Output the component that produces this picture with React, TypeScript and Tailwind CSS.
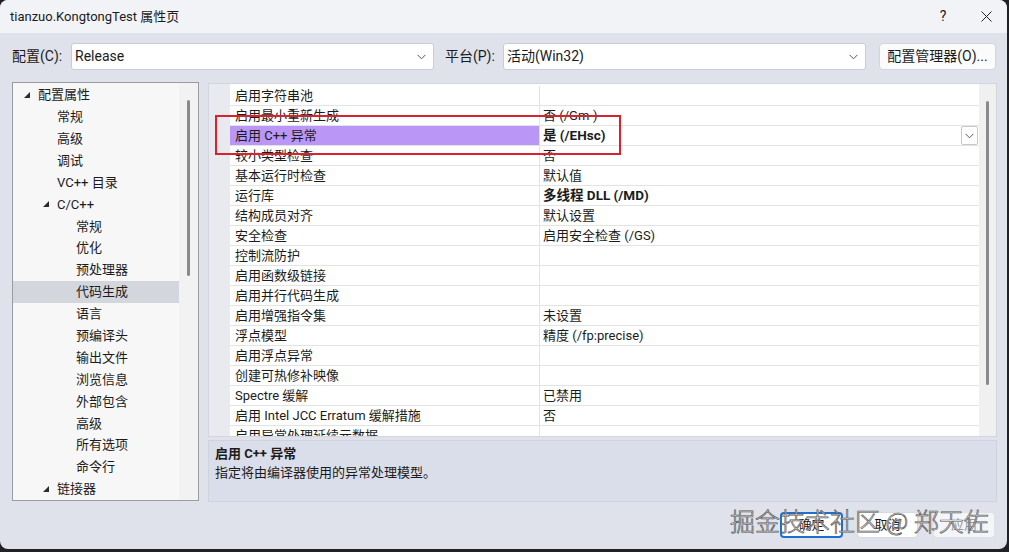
import React from 'react'

type TreeItem = { label: string; level: 0 | 1 | 2; open?: boolean; selected?: boolean }

const tree: TreeItem[] = [
  { label: '配置属性', level: 0, open: true },
  { label: '常规', level: 1 },
  { label: '高级', level: 1 },
  { label: '调试', level: 1 },
  { label: 'VC++ 目录', level: 1 },
  { label: 'C/C++', level: 1, open: true },
  { label: '常规', level: 2 },
  { label: '优化', level: 2 },
  { label: '预处理器', level: 2 },
  { label: '代码生成', level: 2, selected: true },
  { label: '语言', level: 2 },
  { label: '预编译头', level: 2 },
  { label: '输出文件', level: 2 },
  { label: '浏览信息', level: 2 },
  { label: '外部包含', level: 2 },
  { label: '高级', level: 2 },
  { label: '所有选项', level: 2 },
  { label: '命令行', level: 2 },
  { label: '链接器', level: 1, open: true },
]

type Prop = { name: string; value?: string; bold?: boolean; active?: boolean }

const props: Prop[] = [
  { name: '启用字符串池' },
  { name: '启用最小重新生成', value: '否 (/Gm-)' },
  { name: '启用 C++ 异常', value: '是 (/EHsc)', bold: true, active: true },
  { name: '较小类型检查', value: '否' },
  { name: '基本运行时检查', value: '默认值' },
  { name: '运行库', value: '多线程 DLL (/MD)', bold: true },
  { name: '结构成员对齐', value: '默认设置' },
  { name: '安全检查', value: '启用安全检查 (/GS)' },
  { name: '控制流防护' },
  { name: '启用函数级链接' },
  { name: '启用并行代码生成' },
  { name: '启用增强指令集', value: '未设置' },
  { name: '浮点模型', value: '精度 (/fp:precise)' },
  { name: '启用浮点异常' },
  { name: '创建可热修补映像' },
  { name: 'Spectre 缓解', value: '已禁用' },
  { name: '启用 Intel JCC Erratum 缓解措施', value: '否' },
  { name: '启用异常处理延续元数据' },
]

const indent = { 0: 'pl-[25px]', 1: 'pl-[44px]', 2: 'pl-[63px]' }

function Chevron({ className = '' }: { className?: string }) {
  return (
    <svg width="9" height="6" viewBox="0 0 9 6" className={className}>
      <path d="M0.5 0.8 L4.5 4.8 L8.5 0.8" fill="none" stroke="#555" strokeWidth="1" />
    </svg>
  )
}

function Triangle() {
  return (
    <span className="-ml-[14px] w-[14px] flex items-center">
      <svg width="6" height="6" viewBox="0 0 6 6">
        <polygon points="6,0 6,6 0,6" fill="#2b2b2b" />
      </svg>
    </span>
  )
}

function Select({ value }: { value: string }) {
  return (
    <div className="w-[363px] h-[27px] bg-white border border-[#c9ccd4] rounded-[3px] flex items-center justify-between pl-[3px] pr-[7px] text-[14px] text-[#1a1a1a]">
      <span>{value}</span>
      <Chevron />
    </div>
  )
}

export default function App() {
  return (
    <div className="w-[1009px] h-[552px] bg-[#202124] font-['Roboto','Noto_Sans_CJK_SC',sans-serif] text-[#1b1b1b] overflow-hidden">
      <div className="relative w-[1007px] h-[549px] rounded-[8px] bg-[#dfe2eb] flex flex-col overflow-hidden">
        {/* Title bar */}
        <div className="h-[33px] bg-[#f1f3f7] flex items-center pl-[10px] text-[13px] shrink-0">
          <span className="flex-1">tianzuo.KongtongTest 属性页</span>
          <span className="w-[20px] text-center mr-[28px] text-[14px]">?</span>
          <svg width="11" height="11" viewBox="0 0 11 11" className="mr-[15px]">
            <path d="M0.5 0.5 L10.5 10.5 M10.5 0.5 L0.5 10.5" stroke="#222" strokeWidth="1" />
          </svg>
        </div>

        {/* Config row */}
        <div className="h-[49px] flex items-start pt-[10px] pl-[12px] text-[14px] shrink-0">
          <span className="w-[59px] h-[27px] flex items-center">配置(C):</span>
          <Select value="Release" />
          <span className="ml-[11px] w-[58px] h-[27px] flex items-center">平台(P):</span>
          <Select value="活动(Win32)" />
          <div className="ml-[13px] w-[117px] h-[27px] bg-[#fbfbfc] border border-[#d2d5dc] rounded-[4px] flex items-center justify-center">
            配置管理器(O)...
          </div>
        </div>

        {/* Main */}
        <div className="flex h-[420px] shrink-0">
          {/* Tree */}
          <div className="ml-[12px] w-[187px] h-[419px] border border-[#9b9ca3] bg-[#f7f7f7] flex text-[13px]">
            <div className="w-[166px] pt-[1px] flex flex-col">
              {tree.map((t, i) => (
                <div
                  key={i}
                  className={`h-[22px] flex items-center ${indent[t.level]} ${t.selected ? 'bg-[#d4d6de]' : ''}`}
                >
                  {t.open && <Triangle />}
                  <span>{t.label}</span>
                </div>
              ))}
            </div>
            <div className="w-[19px] bg-[#f2f2f2] flex justify-center pt-[17px]">
              <div className="w-[3px] h-[176px] bg-[#8a8a8e] rounded-full" />
            </div>
          </div>

          {/* Right */}
          <div className="ml-[9px] w-[789px] flex flex-col">
            <div className="relative h-[355px] mt-[1px] border border-[#d3d6de] bg-[#e8eaef] flex overflow-hidden">
              <div className="w-[21px]" />
              <div className="w-[749px] bg-white pt-[2px] text-[13px]">
                {props.map((p, i) => (
                  <div key={i} className="h-[20px] flex border-b border-[#e3e3e3]">
                    <div
                      className={`w-[310px] shrink-0 pl-[5px] flex items-center border-r border-[#e3e3e3] ${p.active ? 'bg-[#ba97f6]' : ''}`}
                    >
                      {p.name}
                    </div>
                    <div className={`flex-1 pl-[3px] flex items-center justify-between ${p.bold ? 'font-bold text-[13.5px]' : ''}`}>
                      <span>{p.value}</span>
                      {p.active && (
                        <div className="w-[17px] h-[19px] mr-[1px] bg-white border border-[#c9c9c9] rounded-[2px] flex items-center justify-center">
                          <Chevron />
                        </div>
                      )}
                    </div>
                  </div>
                ))}
              </div>
              <div className="w-[17px] bg-[#f0f0f0] flex justify-center pt-[17px]">
                <div className="w-[3px] h-[284px] bg-[#8a8a8e] rounded-full" />
              </div>
              {/* red annotation box */}
              <div className="absolute left-[6px] top-[31px] w-[406px] h-[40px] border-2 border-[#d8232f]" />
            </div>

            <div className="mt-[3px] h-[62px] border border-[#cfd3dc] bg-[#dadeea] px-[6px] pt-[3px] text-[13px]">
              <div className="font-bold leading-[20px]">启用 C++ 异常</div>
              <div className="leading-[18px]">指定将由编译器使用的异常处理模型。</div>
            </div>
          </div>
        </div>

        {/* Buttons */}
        <div className="flex justify-end pr-[12px] pt-[10px] text-[13px]">
          <div className="w-[63px] h-[26px] bg-white border-2 border-[#1f6fcf] rounded-[4px] flex items-center justify-center">确定</div>
          <div className="ml-[14px] w-[61px] h-[26px] bg-white border border-[#d6d9df] rounded-[4px] flex items-center justify-center">取消</div>
          <div className="ml-[15px] w-[62px] h-[26px] bg-[#f4f5f8] border border-[#dfe1e6] rounded-[4px] flex items-center justify-center text-[#9a9a9a]">应用</div>
        </div>

        {/* watermark */}
        <div className="absolute left-[730px] top-[504px] text-[25px] leading-[32px] font-light text-white [-webkit-text-stroke:0.7px_#555] font-['Noto_Sans_CJK_SC',sans-serif] pointer-events-none whitespace-nowrap">
          掘金技术社区 @ 郑天佐
        </div>
      </div>
    </div>
  )
}
